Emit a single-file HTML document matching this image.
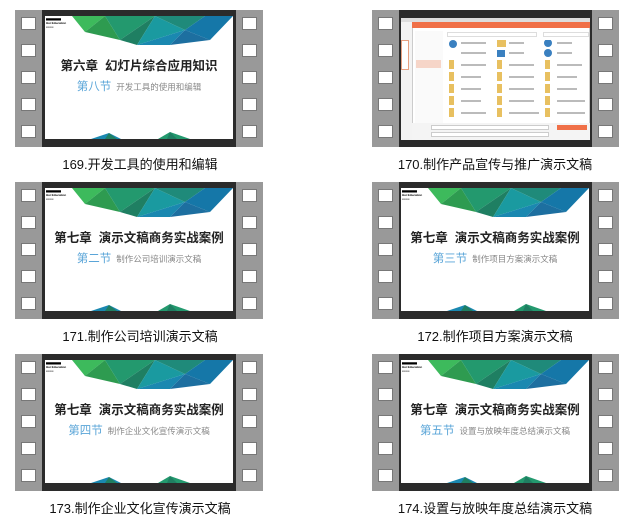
<!DOCTYPE html>
<html><head><meta charset="utf-8"><style>
*{margin:0;padding:0;box-sizing:border-box}
body{width:637px;height:523px;background:#fff;position:relative;overflow:hidden;font-family:"Liberation Sans","Noto Sans CJK SC",sans-serif}
.film{position:absolute;width:248px;height:137px;background:#2b2b2b}
.strip{position:absolute;top:0;width:27px;height:137px;background:#999}
.strip.l{left:0}.strip.r{right:0}
.hole{position:absolute;left:6px;width:15px;height:13px;background:#fff;border:1px solid #777}
.slide{position:absolute;left:30px;top:6px;width:188px;height:123px;background:#fff;overflow:hidden}
.title{position:absolute;left:0;width:100%;top:39px;text-align:center;font-size:12.5px;font-weight:bold;color:#222;white-space:nowrap}
.sub{position:absolute;left:0;width:100%;top:62px;text-align:center;white-space:nowrap;color:#888;font-size:8.5px}
.sub b{font-weight:normal;color:#5aa5d8;font-size:11.5px;margin-right:5px}
.logo{position:absolute;left:1px;top:1px;font-size:3px;line-height:4px;color:#000;font-weight:bold}
.cap{position:absolute;width:280px;text-align:center;font-size:13px;color:#111}
</style></head><body>

<svg width="0" height="0" style="position:absolute"><defs>
<g id="deco">
<polygon points="27,0 60,0 40,16" fill="#3dba5c"/>
<polygon points="40,16 60,0 75,24" fill="#2e9b50"/>
<polygon points="60,0 110,0 75,24" fill="#23996e"/>
<polygon points="75,24 110,0 92,29" fill="#1f7f62"/>
<polygon points="92,29 110,0 140,14" fill="#1a9aa0"/>
<polygon points="110,0 160,0 140,14" fill="#1f8a7a"/>
<polygon points="92,29 140,14 125,29" fill="#1a88b0"/>
<polygon points="140,14 160,0 188,0 165,24" fill="#1577a8"/>
<polygon points="125,29 140,14 165,24" fill="#1d6fa0"/>
<polygon points="46,123 64,117 76,123" fill="#1a88b0"/>
<polygon points="60,123 64,117 72,123" fill="#1f7f62"/>
<polygon points="113,123 125,116 145,123" fill="#23996e"/>
<polygon points="122,123 125,116 132,123" fill="#1f7f62"/>
</g></defs></svg>

<!-- template via repeated markup -->
<div class="film" style="left:15px;top:10px">
<div class="strip l"><div class="hole" style="top:7px"></div><div class="hole" style="top:34px"></div><div class="hole" style="top:61px"></div><div class="hole" style="top:88px"></div><div class="hole" style="top:115px"></div></div>
<div class="strip r"><div class="hole" style="top:7px"></div><div class="hole" style="top:34px"></div><div class="hole" style="top:61px"></div><div class="hole" style="top:88px"></div><div class="hole" style="top:115px"></div></div>
<div class="slide"><svg width="188" height="123" style="position:absolute;left:0;top:0"><use href="#deco"/></svg><div class="logo">▆▆▆▆▆<br>Hui Education<br>▪▪▪▪▪▪▪</div>
<div class="title">第六章&nbsp; 幻灯片综合应用知识</div><div class="sub"><b>第八节</b>开发工具的使用和编辑</div></div></div>
<div class="cap" style="left:0;top:154px">169.开发工具的使用和编辑</div>

<div class="film" style="left:372px;top:10px;width:247px">
<div class="strip l"><div class="hole" style="top:7px"></div><div class="hole" style="top:34px"></div><div class="hole" style="top:61px"></div><div class="hole" style="top:88px"></div><div class="hole" style="top:115px"></div></div>
<div class="strip r"><div class="hole" style="top:7px"></div><div class="hole" style="top:34px"></div><div class="hole" style="top:61px"></div><div class="hole" style="top:88px"></div><div class="hole" style="top:115px"></div></div>
<div class="slide" style="left:29px;top:8px;width:189px;height:122px;background:#f3f3f3">
<div style="position:absolute;left:0;top:0;width:189px;height:4px;background:#ddd"></div>
<div style="position:absolute;left:0;top:22px;width:8px;height:30px;border:1px solid #e8a080;background:#fff"></div>
<div style="position:absolute;left:11px;top:4px;width:178px;height:118px;background:#fff;border:1px solid #ccc"></div>
<div style="position:absolute;left:11px;top:4px;width:178px;height:6px;background:#f07048"></div>
<div style="position:absolute;left:14px;top:13px;width:28px;height:105px;background:#fafafa"></div>
<div style="position:absolute;left:15px;top:42px;width:25px;height:8px;background:#f6d5c8"></div>
<div style="position:absolute;left:46px;top:14px;width:90px;height:5px;border:1px solid #ddd"></div>
<div style="position:absolute;left:142px;top:14px;width:46px;height:5px;border:1px solid #ddd"></div>
<svg width="140" height="85" style="position:absolute;left:46px;top:22px">
<g fill="#e8c060"><rect x="2" y="20" width="5" height="9"/><rect x="2" y="32" width="5" height="9"/><rect x="2" y="44" width="5" height="9"/><rect x="2" y="56" width="5" height="9"/><rect x="2" y="68" width="5" height="9"/><rect x="50" y="0" width="9" height="7"/><rect x="50" y="20" width="5" height="9"/><rect x="50" y="32" width="5" height="9"/><rect x="50" y="44" width="5" height="9"/><rect x="50" y="56" width="5" height="9"/><rect x="50" y="68" width="5" height="9"/><rect x="98" y="20" width="5" height="9"/><rect x="98" y="32" width="5" height="9"/><rect x="98" y="44" width="5" height="9"/><rect x="98" y="56" width="5" height="9"/><rect x="98" y="68" width="5" height="9"/></g>
<g fill="#3a80c0"><circle cx="6" cy="4" r="4"/><rect x="50" y="10" width="8" height="7"/><circle cx="101" cy="3" r="4"/><circle cx="101" cy="13" r="4"/></g>
<g fill="#bbb"><rect x="14" y="2" width="25" height="2"/><rect x="14" y="12" width="25" height="2"/><rect x="14" y="24" width="25" height="2"/><rect x="14" y="36" width="20" height="2"/><rect x="14" y="48" width="20" height="2"/><rect x="14" y="60" width="20" height="2"/><rect x="14" y="72" width="25" height="2"/><rect x="62" y="2" width="15" height="2"/><rect x="62" y="12" width="15" height="2"/><rect x="62" y="24" width="25" height="2"/><rect x="62" y="36" width="25" height="2"/><rect x="62" y="48" width="25" height="2"/><rect x="62" y="60" width="25" height="2"/><rect x="62" y="72" width="30" height="2"/><rect x="110" y="2" width="15" height="2"/><rect x="110" y="12" width="15" height="2"/><rect x="110" y="24" width="25" height="2"/><rect x="110" y="36" width="20" height="2"/><rect x="110" y="48" width="20" height="2"/><rect x="110" y="60" width="28" height="2"/><rect x="110" y="72" width="28" height="2"/></g></svg>
<div style="position:absolute;left:11px;top:105px;width:178px;height:17px;background:#f4f4f4"></div>
<div style="position:absolute;left:30px;top:107px;width:118px;height:5px;border:1px solid #ccc;background:#fff"></div>
<div style="position:absolute;left:30px;top:114px;width:118px;height:5px;border:1px solid #ccc;background:#fff"></div>
<div style="position:absolute;left:156px;top:107px;width:30px;height:5px;background:#f07048"></div>
</div></div>
<div class="cap" style="left:355px;top:154px">170.制作产品宣传与推广演示文稿</div>

<div class="film" style="left:15px;top:182px">
<div class="strip l"><div class="hole" style="top:7px"></div><div class="hole" style="top:34px"></div><div class="hole" style="top:61px"></div><div class="hole" style="top:88px"></div><div class="hole" style="top:115px"></div></div>
<div class="strip r"><div class="hole" style="top:7px"></div><div class="hole" style="top:34px"></div><div class="hole" style="top:61px"></div><div class="hole" style="top:88px"></div><div class="hole" style="top:115px"></div></div>
<div class="slide"><svg width="188" height="123" style="position:absolute;left:0;top:0"><use href="#deco"/></svg><div class="logo">▆▆▆▆▆<br>Hui Education<br>▪▪▪▪▪▪▪</div>
<div class="title">第七章&nbsp; 演示文稿商务实战案例</div><div class="sub"><b>第二节</b>制作公司培训演示文稿</div></div></div>
<div class="cap" style="left:0;top:326px">171.制作公司培训演示文稿</div>

<div class="film" style="left:372px;top:182px;width:247px">
<div class="strip l"><div class="hole" style="top:7px"></div><div class="hole" style="top:34px"></div><div class="hole" style="top:61px"></div><div class="hole" style="top:88px"></div><div class="hole" style="top:115px"></div></div>
<div class="strip r"><div class="hole" style="top:7px"></div><div class="hole" style="top:34px"></div><div class="hole" style="top:61px"></div><div class="hole" style="top:88px"></div><div class="hole" style="top:115px"></div></div>
<div class="slide" style="left:29px"><svg width="188" height="123" style="position:absolute;left:0;top:0"><use href="#deco"/></svg><div class="logo">▆▆▆▆▆<br>Hui Education<br>▪▪▪▪▪▪▪</div>
<div class="title">第七章&nbsp; 演示文稿商务实战案例</div><div class="sub"><b>第三节</b>制作项目方案演示文稿</div></div></div>
<div class="cap" style="left:355px;top:326px">172.制作项目方案演示文稿</div>

<div class="film" style="left:15px;top:354px">
<div class="strip l"><div class="hole" style="top:7px"></div><div class="hole" style="top:34px"></div><div class="hole" style="top:61px"></div><div class="hole" style="top:88px"></div><div class="hole" style="top:115px"></div></div>
<div class="strip r"><div class="hole" style="top:7px"></div><div class="hole" style="top:34px"></div><div class="hole" style="top:61px"></div><div class="hole" style="top:88px"></div><div class="hole" style="top:115px"></div></div>
<div class="slide"><svg width="188" height="123" style="position:absolute;left:0;top:0"><use href="#deco"/></svg><div class="logo">▆▆▆▆▆<br>Hui Education<br>▪▪▪▪▪▪▪</div>
<div class="title">第七章&nbsp; 演示文稿商务实战案例</div><div class="sub"><b>第四节</b>制作企业文化宣传演示文稿</div></div></div>
<div class="cap" style="left:0;top:498px">173.制作企业文化宣传演示文稿</div>

<div class="film" style="left:372px;top:354px;width:247px">
<div class="strip l"><div class="hole" style="top:7px"></div><div class="hole" style="top:34px"></div><div class="hole" style="top:61px"></div><div class="hole" style="top:88px"></div><div class="hole" style="top:115px"></div></div>
<div class="strip r"><div class="hole" style="top:7px"></div><div class="hole" style="top:34px"></div><div class="hole" style="top:61px"></div><div class="hole" style="top:88px"></div><div class="hole" style="top:115px"></div></div>
<div class="slide" style="left:29px"><svg width="188" height="123" style="position:absolute;left:0;top:0"><use href="#deco"/></svg><div class="logo">▆▆▆▆▆<br>Hui Education<br>▪▪▪▪▪▪▪</div>
<div class="title">第七章&nbsp; 演示文稿商务实战案例</div><div class="sub"><b>第五节</b>设置与放映年度总结演示文稿</div></div></div>
<div class="cap" style="left:355px;top:498px">174.设置与放映年度总结演示文稿</div>

</body></html>
